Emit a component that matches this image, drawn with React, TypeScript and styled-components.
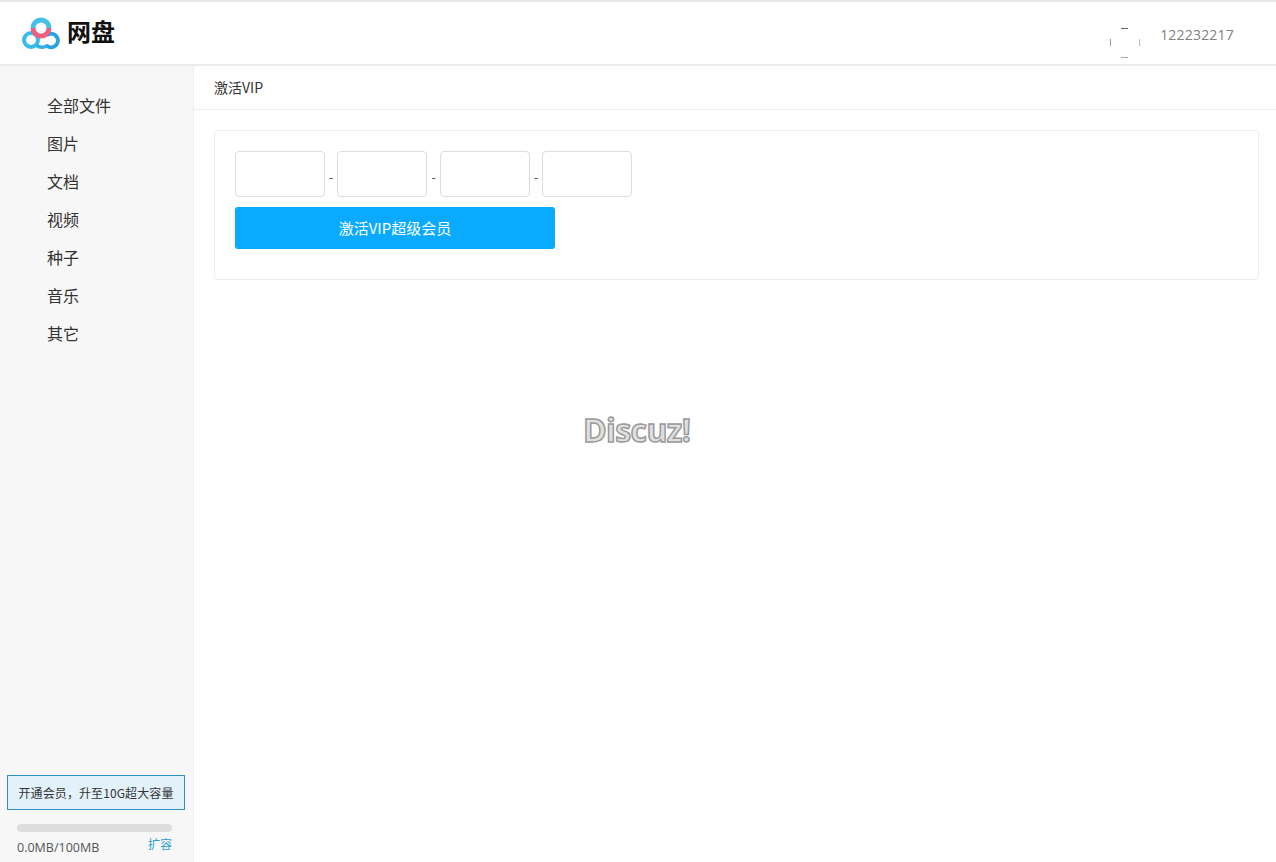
import React from "react";
import styled, { createGlobalStyle } from "styled-components";

const NAV_ITEMS = ["全部文件", "图片", "文档", "视频", "种子", "音乐", "其它"];

function Logo() {
  return (
    <svg width="38" height="33" viewBox="0 0 38 33" fill="none">
      <circle cx="9" cy="23" r="7" stroke="#38bde9" strokeWidth="4" />
      <path d="M26 17.5a6.8 6.8 0 1 1-1 11.5" stroke="#2aa2e0" strokeWidth="4" strokeLinecap="round" />
      <path d="M14 28c3.500 2.600 7 3 11 1" stroke="#2fb0e6" strokeWidth="3.600" />
      <path d="M11 11a8 8 0 0 1 16 0" stroke="#45c0ea" strokeWidth="5" />
      <path d="M27 11a8 8 0 0 1-16 0" stroke="#ee5f80" strokeWidth="5" />
    </svg>
  );
}

function BrokenAvatar() {
  return (
    <svg width="30" height="30" viewBox="0 0 30 30" stroke="#666" fill="none">
      <path d="M11 .5h7" />
      <path d="M.5 11v7" stroke="#999" />
      <path d="M29.5 11v7" stroke="#bbb" />
      <path d="M11 29.5h7" stroke="#aaa" />
    </svg>
  );
}

export default function App() {
  return (
    <Page>
      <GlobalStyle />
      <Header>
        <Brand>
          <Logo />
          <BrandName>网盘</BrandName>
        </Brand>
        <User>
          <BrokenAvatar />
          <UserName>122232217</UserName>
        </User>
      </Header>
      <Body>
        <Sidebar>
          <NavList>
            {NAV_ITEMS.map((item) => (
              <NavItem key={item}>{item}</NavItem>
            ))}
          </NavList>
          <UpgradeBox>开通会员，升至10G超大容量</UpgradeBox>
          <UsageBar />
          <UsageRow>
            <span>0.0MB/100MB</span>
            <ExpandLink>扩容</ExpandLink>
          </UsageRow>
        </Sidebar>
        <Main>
          <Crumb>激活VIP</Crumb>
          <Card>
            <CodeRow>
              <CodeInput />
              <Dash>-</Dash>
              <CodeInput />
              <Dash>-</Dash>
              <CodeInput />
              <Dash>-</Dash>
              <CodeInput />
            </CodeRow>
            <ActivateButton>激活VIP超级会员</ActivateButton>
          </Card>
          <Watermark>Discuz!</Watermark>
        </Main>
      </Body>
    </Page>
  );
}

const GlobalStyle = createGlobalStyle`
  html, body {
    margin: 0;
    padding: 0;
    height: 100%;
    overflow: hidden;
    background: #fff;
    font-family: "Noto Sans CJK SC", "Open Sans", sans-serif;
  }
`;

const Page = styled.div`
  height: 862px;
  display: flex;
  flex-direction: column;
  color: #333;
`;

const Header = styled.header`
  box-sizing: border-box;
  height: 66px;
  flex: none;
  display: flex;
  align-items: center;
  justify-content: space-between;
  padding: 0 42px 0 22px;
  border-top: 2px solid #e8e8e8;
  border-bottom: 2px solid #ececec;
`;

const Brand = styled.div`
  display: flex;
  align-items: center;
  gap: 7px;
`;

const BrandName = styled.div`
  font-size: 24px;
  font-weight: 700;
  color: #111;
  line-height: 34px;
  margin-top: -4px;
`;

const User = styled.div`
  display: flex;
  align-items: center;
  gap: 20px;
  margin-top: 20px;
`;

const UserName = styled.span`
  font-family: "Open Sans", sans-serif;
  font-size: 14px;
  letter-spacing: 0.2px;
  color: #808080;
  margin-top: -18px;
`;

const Body = styled.div`
  flex: 1;
  display: flex;
  min-height: 0;
`;

const Sidebar = styled.aside`
  box-sizing: border-box;
  width: 194px;
  flex: none;
  display: flex;
  flex-direction: column;
  background: #f7f7f7;
  border-right: 1px solid #eeeeee;
  padding-bottom: 4px;
`;

const NavList = styled.nav`
  flex: 1;
  padding: 20px 0 0 47px;
`;

const NavItem = styled.div`
  height: 38px;
  line-height: 38px;
  font-size: 16px;
  color: #333;
`;

const UpgradeBox = styled.div`
  box-sizing: border-box;
  width: 178px;
  height: 35px;
  margin-left: 7px;
  line-height: 33px;
  text-align: center;
  white-space: nowrap;
  font-size: 12px;
  letter-spacing: 0.1px;
  color: #333;
  background: #e3f1fa;
  border: 1px solid #2f8fc4;
`;

const UsageBar = styled.div`
  width: 155px;
  height: 8px;
  margin: 14px 0 0 17px;
  border-radius: 4px;
  background: #dddddd;
`;

const UsageRow = styled.div`
  display: flex;
  justify-content: space-between;
  align-items: flex-start;
  width: 155px;
  margin: 6px 0 0 17px;
  font-size: 12.5px;
  line-height: 20px;
  color: #555;
  font-family: "Open Sans", sans-serif;
`;

const ExpandLink = styled.a`
  font-family: "Noto Sans CJK SC", sans-serif;
  font-size: 12px;
  color: #2a9fd0;
  margin-top: -4px;
`;

const Main = styled.main`
  flex: 1;
  min-width: 0;
  position: relative;
`;

const Crumb = styled.div`
  box-sizing: border-box;
  height: 44px;
  line-height: 43px;
  padding-left: 20px;
  font-size: 14px;
  color: #333;
  border-bottom: 1px solid #eeeeee;
`;

const Card = styled.section`
  box-sizing: border-box;
  width: 1045px;
  height: 150px;
  margin: 20px 0 0 20px;
  padding: 20px;
  border: 1px solid #eeeeee;
  border-radius: 4px;
`;

const CodeRow = styled.div`
  display: flex;
  align-items: center;
`;

const CodeInput = styled.input`
  box-sizing: border-box;
  width: 90px;
  height: 46px;
  border: 1px solid #dddddd;
  border-radius: 4px;
  background: #fff;
  outline: none;
`;

const Dash = styled.span`
  width: 12.4px;
  text-align: center;
  font-size: 12px;
  color: #333;
  margin-top: 4px;
`;

const ActivateButton = styled.button`
  display: block;
  width: 320px;
  height: 42px;
  margin-top: 10px;
  padding: 0 0 2px;
  border: none;
  border-radius: 3px;
  background: #09aaff;
  color: #fff;
  font-family: inherit;
  font-size: 15px;
`;

const Watermark = styled.div`
  position: absolute;
  left: 389px;
  top: 340px;
  font-family: "Open Sans", sans-serif;
  font-size: 32px;
  font-weight: 700;
  line-height: 48px;
  letter-spacing: -0.6px;
  color: #e0e0e0;
  -webkit-text-stroke: 1.5px #9a9a9a;
`;
